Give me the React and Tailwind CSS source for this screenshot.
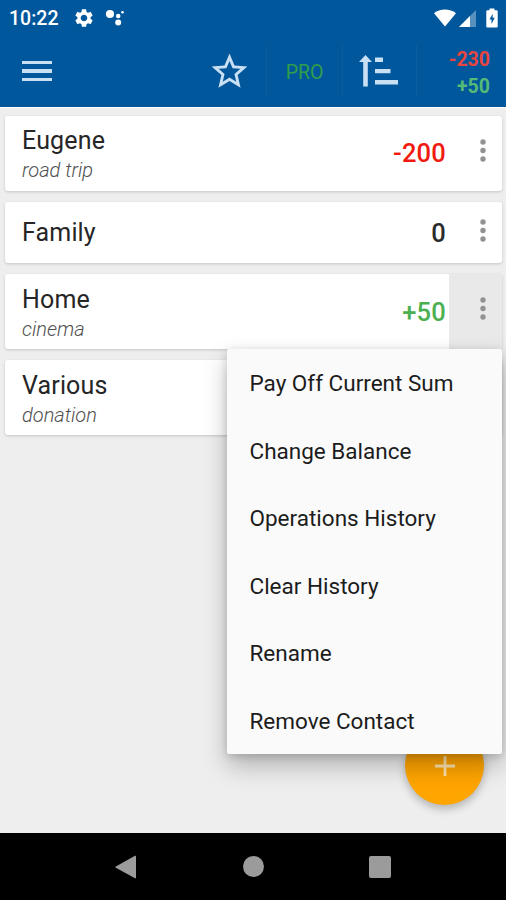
import React, { useState } from 'react';
import { MdSettings, MdStarBorder } from 'react-icons/md';

const contacts = [
  { id: 1, name: 'Eugene', note: 'road trip', sum: -200 },
  { id: 2, name: 'Family', note: '', sum: 0 },
  { id: 3, name: 'Home', note: 'cinema', sum: 50 },
  { id: 4, name: 'Various', note: 'donation', sum: null },
];

const menuItems = [
  'Pay Off Current Sum',
  'Change Balance',
  'Operations History',
  'Clear History',
  'Rename',
  'Remove Contact',
];

const formatSum = (sum) => (sum > 0 ? `+${sum}` : `${sum}`);

const sumColor = (sum) => {
  if (sum < 0) return 'text-[#f01a10]';
  if (sum > 0) return 'text-[#4caf50]';
  return 'text-[#2b2b2b]';
};

const StatusBar = () => (
  <div className="flex h-9 items-center justify-between pl-[9px] pr-2 text-white">
    <div className="flex items-center">
      <span className="w-[51px] whitespace-nowrap pt-[2px] text-[19.500px] font-medium leading-[34px]">10:22</span>
      <MdSettings className="ml-[13px] h-[22px] w-[22px]" />
      <svg className="ml-[10px] h-[18px] w-[20px]" viewBox="0 0 20 18" fill="currentColor">
        <circle cx="5" cy="5" r="4.1" />
        <circle cx="13.200" cy="7" r="2.3" />
        <circle cx="13.200" cy="13.500" r="3" />
        <circle cx="17.500" cy="3.3" r="1.3" />
      </svg>
    </div>
    <div className="flex items-center">
      <svg className="h-[18px] w-[22px]" viewBox="0 0 22 18" fill="currentColor">
        <path d="M11 17.5 0 4.2C3.2 1.8 6.800.5 11 .5s7.800 1.300 11 3.700z" />
      </svg>
      <svg className="ml-[3px] h-[17px] w-[17px]" viewBox="0 0 17 17" fill="currentColor">
        <path d="M17 0v17H0z" opacity=".35" />
        <path d="M11 6v11H0z" />
      </svg>
      <svg className="ml-[10px] h-5 w-3" viewBox="0 0 12 20">
        <path d="M3.500 2.300V.5h5v1.800H10.700a1 1 0 0 1 1 1V18.500a1 1 0 0 1-1 1H1.300a1 1 0 0 1-1-1V3.300a1 1 0 0 1 1-1z" fill="#fff" />
        <path d="M6.600 5.800 3.500 11.400h2v4.500l3.200-6.200H6.600z" fill="#01579b" />
      </svg>
    </div>
  </div>
);

const Toolbar = () => (
  <div className="flex h-[70px] items-center text-[#c9dff3]">
    <button className="ml-[22px] flex w-[30px] flex-col gap-[5px]">
      <span className="h-[3.500px] w-full bg-current" />
      <span className="h-[3.500px] w-full bg-current" />
      <span className="h-[3.500px] w-full bg-current" />
    </button>
    <button className="ml-[156px]">
      <MdStarBorder className="h-[43px] w-[43px]" />
    </button>
    <div className="ml-[15px] h-[52px] w-px bg-[#0b5d9e]" />
    <button className="w-[75px] pt-[3px] text-center text-[19.500px] text-[#2f9e4c]">PRO</button>
    <div className="h-[52px] w-px bg-[#0b5d9e]" />
    <button className="ml-4">
      <svg className="h-8 w-10" viewBox="0 0 40 32" fill="currentColor">
        <path d="M6.500 0 13 7H8.800v24.500h-4.600V7H0z" />
        <path d="M16 2.500h8v4.500h-8zM16 14h15.500v4.200H16zM16 25h23v4.500H16z" />
      </svg>
    </button>
    <div className="ml-[17px] h-[52px] w-px bg-[#0b5d9e]" />
    <div className="ml-auto mr-4 pt-[3px] text-right text-[19.500px] font-bold leading-[27px]">
      <div className="text-[#e84540]">-230</div>
      <div className="text-[#55b978]">+50</div>
    </div>
  </div>
);

const ContactMenu = () => (
  <ul className="absolute right-0 top-full z-20 w-[275px] rounded-[2px] bg-[#fafafa] shadow-[0_12px_24px_rgba(0,0,0,0.25),0_2px_8px_rgba(0,0,0,0.15)]">
    {menuItems.map((item) => (
      <li
        key={item}
        className="flex h-[67.500px] cursor-pointer items-center pl-[22.500px] pt-[3px] text-[22.500px] text-[#1c1c1c]"
      >
        {item}
      </li>
    ))}
  </ul>
);

const ContactCard = ({ contact, open, onToggle }) => (
  <div
    className={`relative flex rounded-[3px] bg-white shadow-[0_1px_3px_rgba(0,0,0,0.18)] ${
      contact.note ? 'h-[75px]' : 'h-[61.500px]'
    }`}
  >
    <div className={`flex flex-1 flex-col justify-center pl-[17px] ${contact.note ? 'pt-[5px]' : 'pt-px'}`}>
      <div className="text-[25px] leading-[30px] tracking-[0.150px] text-[#262626]">{contact.name}</div>
      {contact.note && (
        <div className="text-[20px] font-light italic leading-[29px] text-[#505050]">{contact.note}</div>
      )}
    </div>
    {contact.sum !== null && (
      <div className={`flex items-center pr-[3px] pt-px text-[25.500px] font-medium tracking-[0.200px] ${sumColor(contact.sum)}`}>
        {formatSum(contact.sum)}
      </div>
    )}
    <button
      onClick={onToggle}
      className={`flex w-[53px] justify-center pl-[14px] ${contact.note ? 'pt-[23px]' : 'pt-[17px]'} ${
        open ? 'bg-[#e9e9e9]' : ''
      }`}
    >
      <svg className="h-[23px] w-[6px]" viewBox="0 0 6 23" fill="#929292">
        <circle cx="3" cy="3" r="2.700" />
        <circle cx="3" cy="11.500" r="2.700" />
        <circle cx="3" cy="20" r="2.700" />
      </svg>
    </button>
    {open && <ContactMenu />}
  </div>
);

const NavigationBar = () => (
  <div className="flex h-[67px] items-center bg-black text-[#9b9b9b]">
    <svg className="ml-[115px] h-6 w-[21px]" viewBox="0 0 21 24" fill="currentColor">
      <path d="M20 .8q1-.5 1 .7v21q0 1.200-1 .7L.8 12.700q-.9-.6 0-1.200z" />
    </svg>
    <div className="ml-[107px] h-[21px] w-[21px] rounded-full bg-current" />
    <div className="ml-[105px] h-[22px] w-[22px] rounded-[2px] bg-current" />
  </div>
);

const App = () => {
  const [openId, setOpenId] = useState(3); // Contact whose menu is open

  return (
    <div className="flex h-[900px] w-[506px] flex-col overflow-hidden bg-[#eeeeee] font-[Roboto,sans-serif]">
      {/* Header */}
      <header className="h-[107px] shrink-0 bg-[#01579b] shadow-[0_1px_1px_rgba(255,255,255,0.9)]">
        <StatusBar />
        <Toolbar />
      </header>

      {/* Contacts */}
      <main className="relative flex flex-1 flex-col gap-[11px] pl-[5px] pr-1 pt-[8.600px]">
        {contacts.map((contact) => (
          <ContactCard
            key={contact.id}
            contact={contact}
            open={openId === contact.id}
            onToggle={() => setOpenId(openId === contact.id ? null : contact.id)}
          />
        ))}

        {/* Add contact button */}
        <button className="absolute bottom-[28px] right-[22px] z-10 flex h-[79px] w-[79px] items-center justify-center rounded-full bg-[#ffa500] shadow-[0_4px_8px_rgba(0,0,0,0.25)]">
          <svg className="h-5 w-5" viewBox="0 0 20 20" stroke="#ffe3ac" strokeWidth="2.800">
            <path d="M10 0v20M0 10h20" />
          </svg>
        </button>
      </main>

      <NavigationBar />
    </div>
  );
};

export default App;
